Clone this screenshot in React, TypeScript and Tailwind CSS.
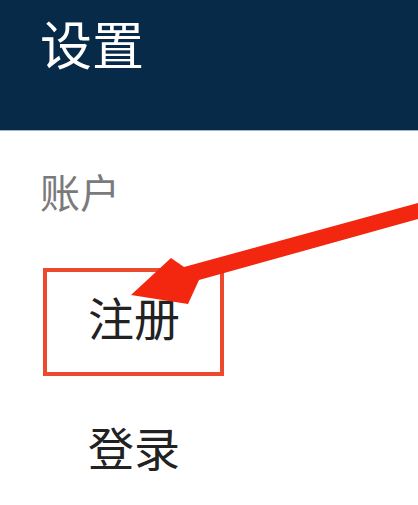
import React from 'react';

const cjk = { fontFamily: '"Noto Sans CJK SC", "Noto Sans", sans-serif' };

function Item({ label }: { label: string }) {
  return (
    <div className="py-[42px] pl-[48px] text-[46px] leading-none text-[#222222]">{label}</div>
  );
}

export default function App() {
  return (
    <div className="relative w-[418px] h-[505px] overflow-hidden bg-white" style={cjk}>
      {/* Header */}
      <header className="h-[131px] bg-[#072a48] px-[40px] pt-[17px] border-b border-[#9fb3c6]">
        <h1 className="text-[52px] leading-none text-white">设置</h1>
      </header>

      {/* Account section */}
      <section className="px-[40px] pt-[40px]">
        <p className="text-[40px] leading-none text-[#7a7a7a]">账户</p>
        <div className="mt-[40px]">
          <Item label="注册" />
          <Item label="登录" />
        </div>
      </section>

      {/* Annotation */}
      <div className="absolute left-[43px] top-[268px] w-[181px] h-[108px] border-[4px] border-[#ec4a2f]" />
      <svg className="absolute inset-0" width="418" height="505" viewBox="0 0 418 505">
        <polygon
          points="131,295 171,258 184,267 418,203 418,219 199,280 188,304"
          fill="#f3260f"
        />
      </svg>
    </div>
  );
}
